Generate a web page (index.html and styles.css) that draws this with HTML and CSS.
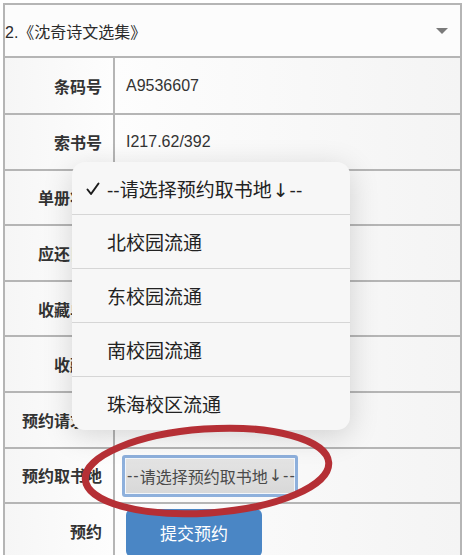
FILE: index.html
```html
<!DOCTYPE html>
<html lang="zh-CN">
<head>
  <meta charset="UTF-8" />
  <title>预约图书</title>
  <link rel="stylesheet" href="styles.css">
</head>
<body>

  <div class="sheet">
    <div class="book-title">
      <span>2.《沈奇诗文选集》</span>
      <span class="caret"></span>
    </div>

    <div class="row first">
      <div class="label">条码号</div>
      <div class="value">A9536607</div>
    </div>
    <div class="row">
      <div class="label">索书号</div>
      <div class="value">I217.62/392</div>
    </div>
    <div class="row">
      <div class="label">单册状态</div>
      <div class="value">借出</div>
    </div>
    <div class="row">
      <div class="label">应还日期</div>
      <div class="value">2020-05-01</div>
    </div>
    <div class="row">
      <div class="label">收藏单位</div>
      <div class="value">图书馆</div>
    </div>
    <div class="row">
      <div class="label">收藏地</div>
      <div class="value">书库</div>
    </div>
    <div class="row">
      <div class="label">预约请求日</div>
      <div class="value">30天</div>
    </div>
    <div class="row">
      <div class="label">预约取书地</div>
      <div class="value">
        <div class="pick"><span class="dash">--</span>请选择预约取书地<span class="arrow">↓</span><span class="dash">--</span></div>
      </div>
    </div>
    <div class="row">
      <div class="label">预约</div>
      <div class="value">
        <button class="submit">提交预约</button>
      </div>
    </div>
  </div>

  <!-- native picker popup -->
  <div class="picker">
    <div class="option selected">
      <svg class="tick" width="14" height="14" viewBox="0 0 14 14">
        <path d="M1.5 7.5 L5 12 L12.5 1.5" fill="none" stroke="#1c1c1c" stroke-width="2" stroke-linecap="round" stroke-linejoin="round"/>
      </svg>
      <span>--请选择预约取书地<span class="arrow">↓</span>--</span>
    </div>
    <div class="option">北校园流通</div>
    <div class="option">东校园流通</div>
    <div class="option">南校园流通</div>
    <div class="option">珠海校区流通</div>
  </div>

  <!-- red marker circle -->
  <svg class="marker" width="280" height="110" viewBox="0 0 280 110">
    <ellipse cx="139" cy="55" rx="122" ry="42" transform="rotate(-4 139 55)" fill="none" stroke="#b52f35" stroke-width="7"/>
  </svg>

</body>
</html>
```

FILE: styles.css
```css
body {
  margin: 0;
  height: 555px;
  overflow: hidden;
  background: #fff;
  font-family: "Liberation Sans", "Noto Sans CJK SC", sans-serif;
  color: #2b2b2b;
  position: relative;
}

.sheet {
  margin: 3px 1px 0 3px;
  border: 2px solid #b5b5b5;
  border-bottom: none;
}

.book-title {
  height: 51px;
  display: flex;
  align-items: center;
  justify-content: space-between;
  padding: 0 12px 0 0;
  font-size: 16px;
  background: #fcfcfc;
}

.caret {
  width: 0;
  height: 0;
  border-left: 6px solid transparent;
  border-right: 6px solid transparent;
  border-top: 6px solid #7a7a7a;
}

.row {
  display: grid;
  grid-template-columns: 110px 1fr;
  height: 53.6px;
  border-top: 2px solid #b5b5b5;
}

.row.first {
  height: 55px;
}

.label {
  display: flex;
  align-items: center;
  justify-content: flex-end;
  padding-right: 11px;
  font-size: 16px;
  font-weight: bold;
  color: #333;
  border-right: 2px solid #b5b5b5;
  background: linear-gradient(to right, #f6f6f6, #fdfdfd);
}

.value {
  display: flex;
  align-items: center;
  padding-left: 11px;
  font-size: 16px;
  color: #333;
  background: linear-gradient(to right, #fdfdfd, #f4f4f4);
}

.pick {
  width: 168px;
  height: 36px;
  box-sizing: content-box;
  border: 3px solid #8eb0dc;
  border-radius: 3px;
  background: linear-gradient(#e4e4e4, #d8d8d8);
  box-shadow: inset 0 0 0 1px #f2f6fb;
  display: flex;
  align-items: center;
  padding-left: 2px;
  font-size: 16px;
  color: #4a4a4a;
  white-space: nowrap;
  overflow: hidden;
  margin-left: -4px;
  margin-top: 1px;
}

.dash {
  letter-spacing: 1px;
}

.arrow {
  font-family: "DejaVu Sans", sans-serif;
  margin: 0 1px;
}

.submit {
  margin-top: 5px;
  align-self: flex-start;
  width: 136px;
  height: 48px;
  border: none;
  border-radius: 6px;
  background: #4a86c5;
  color: #fff;
  font-family: "Liberation Sans", "Noto Sans CJK SC", sans-serif;
  font-size: 17px;
  padding-bottom: 2px;
}

.picker {
  position: absolute;
  left: 72px;
  top: 162px;
  width: 278px;
  background: #f7f7f7;
  border-radius: 13px;
  box-shadow: 0 6px 30px rgba(0, 0, 0, 0.16);
  overflow: hidden;
}

.option {
  height: 53px;
  display: flex;
  align-items: center;
  padding-left: 35px;
  font-size: 19px;
  color: #222;
  border-top: 1px solid #d6d6d6;
}

.option.selected {
  height: 52px;
  border-top: none;
  padding-left: 14px;
}

.tick {
  margin-right: 7px;
  margin-top: 2px;
}

.marker {
  position: absolute;
  left: 68px;
  top: 416px;
}
```
